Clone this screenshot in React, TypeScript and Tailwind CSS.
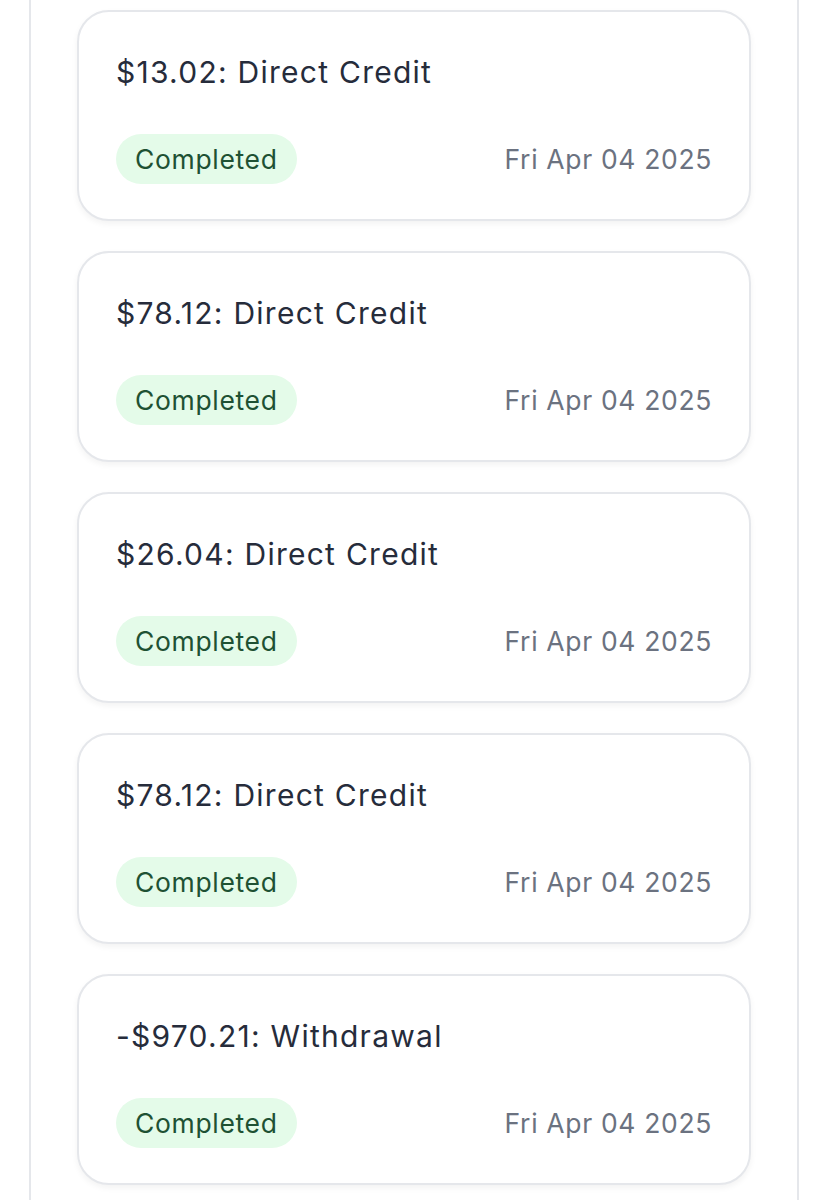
const transactions = [
  { title: '$13.02: Direct Credit', status: 'Completed', date: 'Fri Apr 04 2025' },
  { title: '$78.12: Direct Credit', status: 'Completed', date: 'Fri Apr 04 2025' },
  { title: '$26.04: Direct Credit', status: 'Completed', date: 'Fri Apr 04 2025' },
  { title: '$78.12: Direct Credit', status: 'Completed', date: 'Fri Apr 04 2025' },
  { title: '-$970.21: Withdrawal', status: 'Completed', date: 'Fri Apr 04 2025' },
];

export default function App() {
  return (
    <div className="min-h-[1200px] bg-white font-['Inter',sans-serif]">
      <div className="ml-[29px] mr-[28px] min-h-[1200px] border-x-2 border-[#e5e7eb] px-[46px] pt-[10px]">
        <ul className="flex flex-col gap-[30px]">
          {transactions.map((t, i) => (
            <li
              key={i}
              className="flex h-[211px] flex-col justify-between rounded-[32px] border-2 border-[#e5e7eb] bg-white px-[37px] pt-[40px] pb-[35px] shadow-[0_3px_6px_rgba(0,0,0,0.05)]"
            >
              <h2 className="text-[30px] leading-[40px] tracking-[0.042em] text-[#262c3b]">{t.title}</h2>
              <div className="flex items-center justify-between">
                <span className="rounded-full bg-[#e4fbe9] px-[19px] py-[9px] text-[26.5px] leading-[32px] tracking-[0.025em] text-[#1e5133]">
                  {t.status}
                </span>
                <span className="text-[26.5px] leading-[32px] tracking-[0.025em] text-[#6b7280]">{t.date}</span>
              </div>
            </li>
          ))}
        </ul>
      </div>
    </div>
  );
}
